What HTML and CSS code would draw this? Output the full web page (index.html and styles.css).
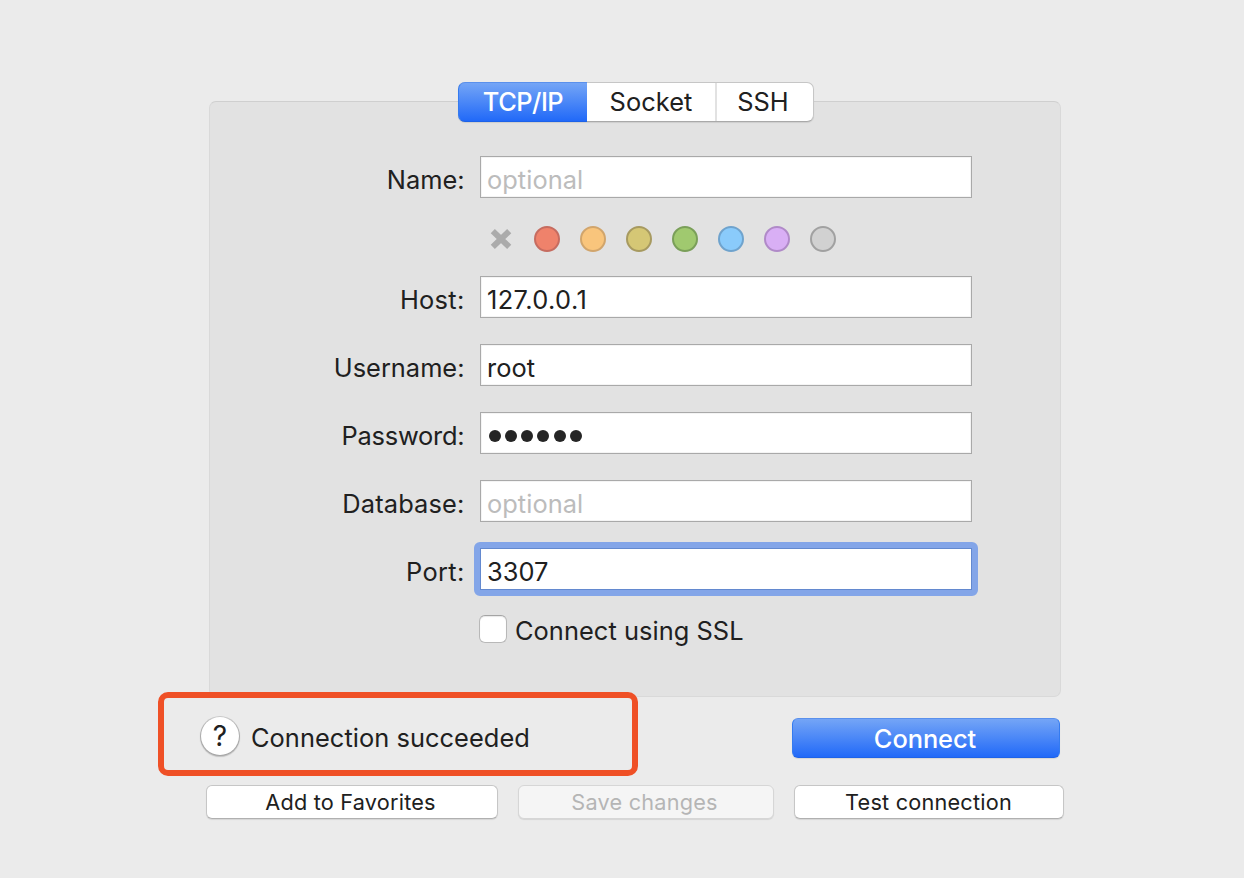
FILE: index.html
```html
<!DOCTYPE html>
<html lang="en">
<head>
<meta charset="utf-8">
<title>Connection</title>
<link rel="stylesheet" href="styles.css">
</head>
<body>
<main class="window">
  <section class="panel">
    <nav class="tabs">
      <div class="tab tab-active"><span class="t-tcp">TCP/IP</span></div>
      <div class="tab tab-socket"><span>Socket</span></div>
      <div class="tab tab-ssh"><span>SSH</span></div>
    </nav>
    <div class="form">
      <div class="row"><span class="label">Name:</span><div class="field"><span class="placeholder">optional</span></div></div>
      <div class="colors">
        <svg class="clear" viewBox="0 0 22 22"><path d="M2.8 3.2 19.2 18.8M19.2 3.2 2.8 18.8" stroke="#ababab" stroke-width="6" fill="none"/></svg>
        <i class="dot red"></i><i class="dot orange"></i><i class="dot yellow"></i><i class="dot green"></i><i class="dot blue"></i><i class="dot purple"></i><i class="dot gray"></i>
      </div>
      <div class="row"><span class="label l-host">Host:</span><div class="field"><span class="v-host">127.0.0.1</span></div></div>
      <div class="row"><span class="label">Username:</span><div class="field"><span>root</span></div></div>
      <div class="row"><span class="label l-pass">Password:</span><div class="field"><div class="bullets"><i></i><i></i><i></i><i></i><i></i><i></i></div></div></div>
      <div class="row"><span class="label l-db">Database:</span><div class="field"><span class="placeholder">optional</span></div></div>
      <div class="row"><span class="label l-host">Port:</span><div class="field focused"><span>3307</span></div></div>
      <div class="ssl"><i class="checkbox"></i><span>Connect using SSL</span></div>
    </div>
  </section>
  <div class="status-row">
    <div class="highlight">
      <div class="help"><span>?</span></div>
      <span class="status">Connection succeeded</span>
    </div>
    <div class="connect"><span>Connect</span></div>
  </div>
  <div class="actions">
    <div class="button add"><span>Add to Favorites</span></div>
    <div class="button save"><span>Save changes</span></div>
    <div class="button test"><span>Test connection</span></div>
  </div>
</main>
</body>
</html>
```
FILE: styles.css
```css
* { box-sizing: border-box; }
body {
  margin: 0;
  background: #ebebeb;
  color: #202020;
  font: 400 25.4px/32px Inter, "Liberation Sans", sans-serif;
  letter-spacing: 0.05px;
}
span { white-space: nowrap; }
.window {
  display: flex;
  flex-direction: column;
  height: 878px;
  padding-top: 101px;
  overflow: hidden;
}
.panel {
  flex: none;
  width: 852px;
  height: 596px;
  margin-left: 209px;
  background: #e2e2e2;
  border: 1px solid #d9d9d9;
  border-top-color: #cfcfcf;
  border-radius: 7px;
}
.tabs {
  display: flex;
  width: 356px;
  height: 40px;
  margin: -20px 0 0 248px;
  background: #fff;
  border: 1px solid #c6c6c6;
  border-bottom-color: #a9a9a9;
  border-radius: 7px;
  box-shadow: 0 1px 1px #00000018;
}
.tab { display: flex; align-items: center; justify-content: center; padding-bottom: 1px; }
.tab-active {
  width: 129px;
  margin: -1px 0 -1px -1px;
  color: #fff;
  font-weight: 500;
  background: linear-gradient(#74a5f6, #2169f8);
  border: 1px solid #347bf0;
  border-top-color: #5a90ec;
  border-bottom-color: #1d62e8;
  border-right: 0;
  border-radius: 7px 0 0 7px;
}
.t-tcp { letter-spacing: -0.5px; }
.tab-socket { width: 128px; }
.tab-ssh { flex: 1; padding-right: 4px; border-left: 2px solid #e2e2e2; }
.form { display: flex; flex-direction: column; padding-top: 34px; }
.row { display: flex; align-items: flex-start; height: 42px; margin-bottom: 26px; }
.label { width: 254.5px; margin-right: 15.5px; padding-top: 8px; text-align: right; letter-spacing: 0; }
.l-host { letter-spacing: 0.3px; }
.l-pass { letter-spacing: -0.2px; }
.l-db { letter-spacing: 0.15px; }
.field {
  width: 492px;
  height: 42px;
  padding: 7px 0 0 6px;
  background: #fff;
  border: 1px solid #a9a9a9;
  box-shadow: inset 0 0 0 1px #f4f4f4;
}
.v-host { letter-spacing: 0.4px; }
.focused { position: relative; border-color: #6389cf; box-shadow: none; }
.focused::before {
  content: "";
  position: absolute;
  inset: -7px;
  border: 6px solid #83a5e8;
  border-radius: 6px;
}
.placeholder { color: #bcbcbc; }
.colors { display: flex; align-items: center; gap: 20px; height: 26px; margin: 2px 0 24px 280px; }
.clear { width: 22px; height: 22px; margin-right: 2px; }
.dot { width: 26px; height: 26px; border: 2px solid; border-radius: 50%; }
.red { background: #ef826b; border-color: #c66c60; }
.orange { background: #f9c57c; border-color: #d1a56c; }
.yellow { background: #d5c775; border-color: #a79a60; }
.green { background: #a0c96f; border-color: #7a9f59; }
.blue { background: #8acbfb; border-color: #6fa3cd; }
.purple { background: #d9aff5; border-color: #b08ac8; }
.gray { background: #d1d1d1; border-color: #a1a1a1; }
.bullets { display: flex; gap: 4.1px; padding: 9.5px 0 0 2.2px; }
.bullets i { width: 12px; height: 12px; border-radius: 50%; background: #252525; }
.ssl { display: flex; height: 32px; margin: -1px 0 0 269px; }
.checkbox {
  width: 28px;
  height: 28px;
  margin-right: 8px;
  background: #fff;
  border: 1px solid #b8b8b8;
  border-top-color: #a4a4a4;
  border-radius: 6px;
  box-shadow: inset 0 1px 1px #00000018;
}
.status-row { display: flex; flex: none; height: 88px; margin-top: -6px; }
.highlight {
  display: flex;
  align-items: flex-start;
  width: 480px;
  height: 84px;
  margin: 1px 0 0 158px;
  padding: 19px 0 0 37px;
  background: #ebebeb;
  border: 6px solid #ef5026;
  border-radius: 10px;
}
.help {
  display: flex;
  align-items: center;
  justify-content: center;
  width: 38px;
  height: 38px;
  margin-right: 12px;
  font-size: 28px;
  background: #fff;
  border-radius: 50%;
  box-shadow: 0 0 0 1px #00000020, 0 1px 1px 1px #00000030;
}
.status { padding-top: 5px; }
.connect {
  display: flex;
  align-items: center;
  justify-content: center;
  width: 268px;
  height: 40px;
  margin: 27px 0 0 154px;
  padding: 1px 2px 0 0;
  color: #fff;
  font-weight: 500;
  letter-spacing: -0.05px;
  background: linear-gradient(#74a5f6, #2169f8);
  border: 1px solid #347bf0;
  border-top-color: #5a90ec;
  border-bottom-color: #1d62e8;
  border-radius: 6px;
  box-shadow: 0 1px 1px #00000018;
}
.actions { display: flex; gap: 20px; flex: none; margin: 6px 0 0 206px; font-size: 21.7px; letter-spacing: 0.2px; }
.button {
  display: flex;
  align-items: center;
  justify-content: center;
  height: 34px;
  padding-right: 3px;
  background: #fff;
  border: 1px solid #c6c6c6;
  border-bottom-color: #b0b0b0;
  border-radius: 6px;
  box-shadow: 0 1px 1px #00000018;
}
.add { width: 292px; }
.save { width: 256px; color: #b5b5b5; background: #f5f5f5; border-color: #d6d6d6; }
.test { width: 270px; padding-right: 1px; }
```
